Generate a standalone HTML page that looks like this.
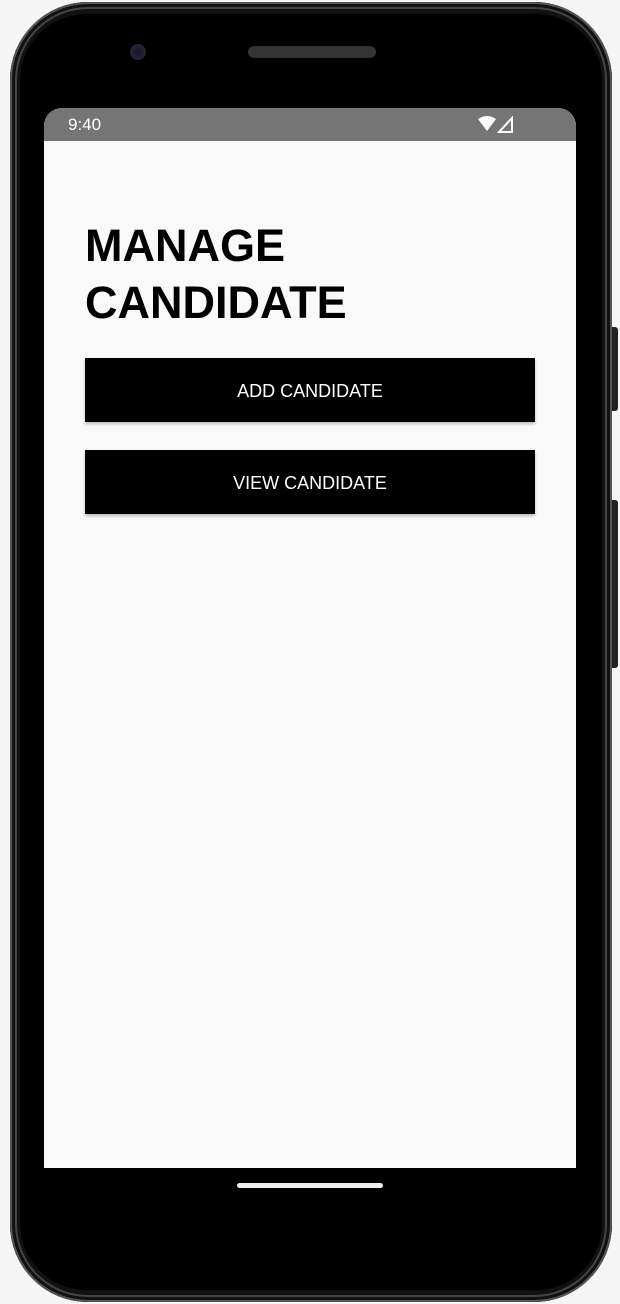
<!DOCTYPE html>
<html><head><style>
body{margin:0;width:620px;height:1304px;background:#f5f5f5;position:relative;overflow:hidden;font-family:"Liberation Sans",sans-serif}
.phone{position:absolute;left:10px;top:2px;width:602px;height:1300px;border-radius:78px;background:#111;box-shadow:inset 0 0 0 2px #555,inset 0 0 0 5px #111,inset 0 0 0 7px #444}
.inner{position:absolute;left:20px;top:14px;width:582px;height:1276px;border-radius:66px;background:#000}
.btnside{position:absolute;left:612px;width:6px;background:#222;border-radius:0 3px 3px 0}
.screen{position:absolute;left:44px;top:108px;width:532px;height:1060px;background:#f9f9f9;border-radius:18px 18px 0 0;overflow:hidden}
.status{height:33px;background:#757575;color:#fff;font-size:17px;line-height:34px;padding-left:24px;position:relative}
h1{position:absolute;left:41px;top:109px;margin:0;font-size:45px;line-height:57px;font-weight:bold;letter-spacing:0;color:#000}
.b{position:absolute;left:41px;width:450px;height:64px;background:#000;color:#fff;font-size:18px;text-align:center;line-height:66px;box-shadow:0 2px 3px rgba(0,0,0,.25)}
</style></head><body>
<div class="phone"></div>
<div class="inner"></div>
<div class="btnside" style="top:327px;height:84px"></div>
<div class="btnside" style="top:500px;height:168px"></div>
<div style="position:absolute;left:130px;top:44px;width:16px;height:16px;border-radius:50%;background:#1a1a2a;box-shadow:inset 0 0 0 4px #223"></div>
<div style="position:absolute;left:248px;top:46px;width:128px;height:12px;border-radius:6px;background:#333"></div>
<div class="screen">
<div class="status">9:40
<svg style="position:absolute;left:434px;top:8px" width="40" height="17" viewBox="0 0 40 17"><path d="M0 3Q9-3 18 3L9 15Z" fill="#fff"/><path d="M34 2V16H21Z" fill="none" stroke="#fff" stroke-width="2"/></svg></div>
<h1>MANAGE<br>CANDIDATE</h1>
<div class="b" style="top:250px">ADD CANDIDATE</div>
<div class="b" style="top:342px">VIEW CANDIDATE</div>
</div>
<div style="position:absolute;left:237px;top:1183px;width:146px;height:5px;border-radius:3px;background:#eee"></div>
</body></html>
